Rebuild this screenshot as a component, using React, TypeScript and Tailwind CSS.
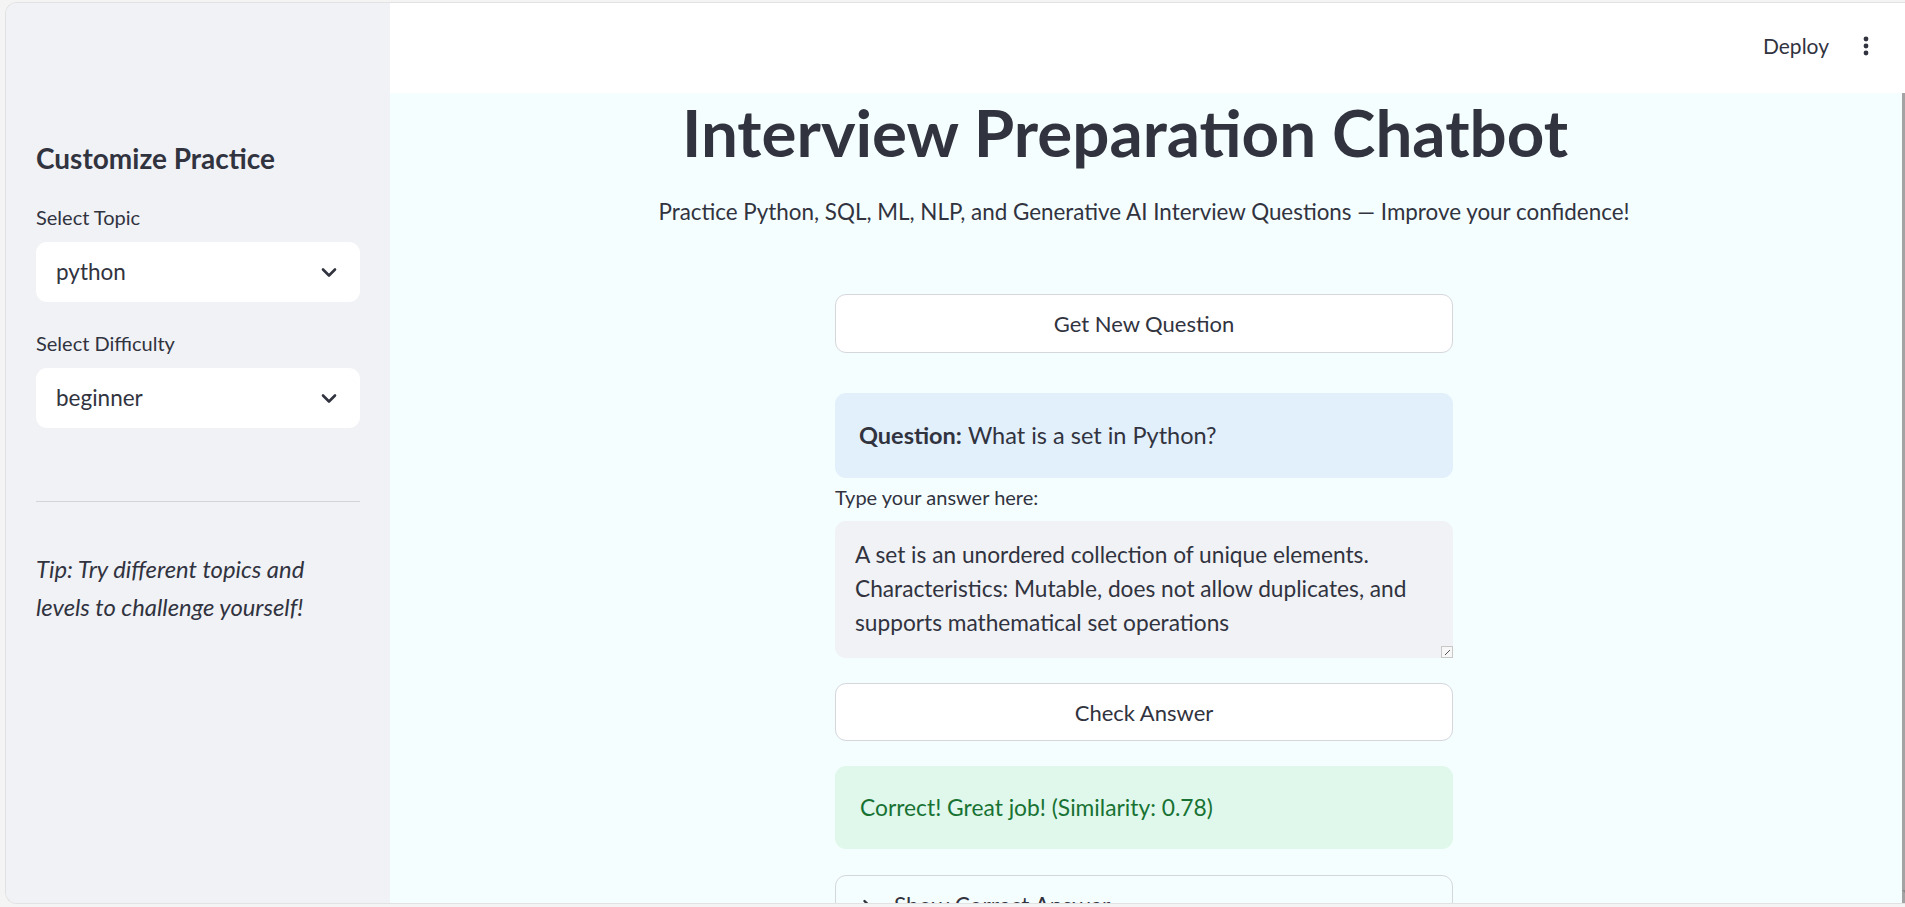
import React from 'react';

function Chevron() {
  return (
    <svg width="16" height="11" viewBox="0 0 16 11" fill="none">
      <path d="M2 2.5 L8 8.5 L14 2.5" stroke="#31333f" strokeWidth="2.6" strokeLinecap="round" strokeLinejoin="round" />
    </svg>
  );
}

function SelectBox({ value }: { value: string }) {
  return (
    <div className="flex h-[60px] items-center justify-between rounded-[11px] bg-white pl-[20px] pr-[23px]">
      <span className="text-[22.5px] text-[#31333f]">{value}</span>
      <Chevron />
    </div>
  );
}

export default function App() {
  return (
    <div className="h-[907px] w-[1905px] overflow-hidden bg-[#f4f4f4] pb-[3px] pl-[5px] pt-[2px] font-['Lato',sans-serif] text-[#31333f]">
      <div className="flex h-full overflow-hidden rounded-l-[12px] border-b border-l border-t border-[#e2e2e2]">
        {/* Sidebar */}
        <aside className="w-[384px] shrink-0 bg-[#f0f2f6] pl-[30px] pr-[30px] pt-[135px]">
          <h2 className="text-[28px] font-bold leading-[40px]">Customize Practice</h2>
          <div className="mt-[27px] text-[20px] leading-[24px]">Select Topic</div>
          <div className="mt-[13px]">
            <SelectBox value="python" />
          </div>
          <div className="mt-[29px] text-[20px] leading-[24px]">Select Difficulty</div>
          <div className="mt-[13px]">
            <SelectBox value="beginner" />
          </div>
          <hr className="mt-[73px] border-0 border-t border-[#d3d5da]" />
          <p className="mt-[48px] text-[23.8px] italic leading-[38px]">
            Tip: Try different topics and levels to challenge yourself!
          </p>
        </aside>

        {/* Main */}
        <div className="flex min-w-0 flex-1 flex-col">
          <header className="flex h-[90px] shrink-0 items-center justify-end bg-white pr-[36px]">
            <span className="mt-[-4px] text-[21px] text-[#31333f]">Deploy</span>
            <svg className="ml-[34px] mt-[-4px]" width="6" height="20" viewBox="0 0 6 20">
              <circle cx="3" cy="3" r="2.4" fill="#31333f" />
              <circle cx="3" cy="10" r="2.4" fill="#31333f" />
              <circle cx="3" cy="17" r="2.4" fill="#31333f" />
            </svg>
          </header>
          <div className="flex min-h-0 flex-1">
            <main className="min-w-0 flex-1 overflow-hidden bg-[#f5fefe] pr-[4px]">
              <h1 className="pr-[38px] text-center text-[65.5px] font-bold leading-[78px]">
                Interview Preparation Chatbot
              </h1>
              <p className="mt-[24px] text-center text-[22.4px] leading-[34px]">
                Practice Python, SQL, ML, NLP, and Generative AI Interview Questions — Improve your confidence!
              </p>
              <div className="mx-auto w-[618px]">
                <button className="mt-[65px] flex h-[59px] w-full items-center justify-center rounded-[11px] border border-[#d5d7dc] bg-white text-[22px]">
                  Get New Question
                </button>
                <div className="mt-[40px] flex h-[85px] items-center rounded-[11px] bg-[#e2f0fc] pl-[24px] text-[23.5px]">
                  <span className="font-bold">Question:</span>
                  <span className="ml-[6px]">What is a set in Python?</span>
                </div>
                <div className="mt-[7px] text-[20px] leading-[24px]">Type your answer here:</div>
                <div className="relative mt-[12px] h-[137px] rounded-[11px] bg-[#f0f2f6] pl-[20px] pr-[24px] pt-[17px] text-[22.7px] leading-[34px]">
                  A set is an unordered collection of unique elements. Characteristics: Mutable, does not allow duplicates, and supports mathematical set operations
                  <svg className="absolute bottom-0 right-0" width="12" height="12" viewBox="0 0 12 12">
                    <rect x="0.5" y="0.5" width="11" height="11" fill="#f7f7f7" stroke="#c8c8c8" />
                    <path d="M4 9 L9 4" stroke="#555" strokeWidth="1" />
                  </svg>
                </div>
                <button className="mt-[25px] flex h-[58px] w-full items-center justify-center rounded-[11px] border border-[#d5d7dc] bg-white text-[22px]">
                  Check Answer
                </button>
                <div className="mt-[25px] flex h-[83px] items-center rounded-[11px] bg-[#dff8eb] pl-[25px] text-[22.8px] text-[#177233]">
                  Correct! Great job! (Similarity: 0.78)
                </div>
                <div className="mt-[26px] h-[80px] rounded-t-[11px] border border-[#d5d7dc]">
                  <div className="flex h-[60px] items-center pl-[26px] text-[22.7px]">
                    <svg width="10" height="14" viewBox="0 0 10 14" fill="none">
                      <path d="M2.5 2 L7.5 7 L2.5 12" stroke="#31333f" strokeWidth="2.4" strokeLinecap="round" strokeLinejoin="round" />
                    </svg>
                    <span className="ml-[22px]">Show Correct Answer</span>
                  </div>
                </div>
              </div>
            </main>
            <div className="relative w-[3px] shrink-0 bg-[#a3a3a3]">
              <div className="absolute bottom-[10px] right-0 h-0 w-0 border-l-[3px] border-t-[3px] border-l-transparent border-t-[#8a8a8a]" />
            </div>
          </div>
        </div>
      </div>
    </div>
  );
}
